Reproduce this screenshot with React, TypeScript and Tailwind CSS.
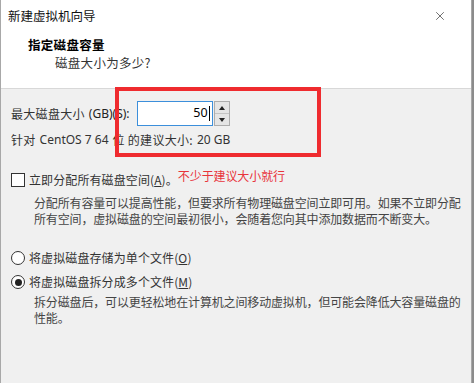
import { X } from 'lucide-react'

const ui = { fontFamily: '"Segoe UI", "Noto Sans", "Noto Sans CJK SC", sans-serif' }
const song = { fontFamily: '"Noto Sans CJK SC", "Noto Sans", sans-serif' }

function Radio({ checked }: { checked?: boolean }) {
  return (
    <span className="flex h-[14px] w-[14px] shrink-0 items-center justify-center rounded-full border border-[#333] bg-white">
      {checked && <span className="h-[7px] w-[7px] rounded-full bg-[#222]" />}
    </span>
  )
}

export default function App() {
  return (
    <div className="flex h-[383px] w-[474px] bg-[#8c8c8c] text-[12px] text-[#1a1a1a]" style={song}>
      <div className="relative flex h-full w-[472px] flex-col border-l border-r border-[#a8a8a8] bg-[#f0f0f0]">
        {/* Header */}
        <div className="h-[89px] shrink-0 border-b border-[#d8d8d8] bg-white">
          <div className="flex items-center justify-between pl-[7px] pr-[24px] pt-[7px]">
            <span className="text-[12.5px] leading-[18px] text-[#111]">新建虚拟机向导</span>
            <X className="h-[14px] w-[14px] text-[#333]" strokeWidth={1.2} />
          </div>
          <div className="ml-[27px] mt-[12px] text-[12.5px] font-bold leading-[16px] tracking-[0.3px] text-black">
            指定磁盘容量
          </div>
          <div className="ml-[54px] mt-[2px] text-[12.5px] leading-[16px] tracking-[0.3px] text-[#333]">
            磁盘大小为多少?
          </div>
        </div>

        {/* Body */}
        <div className="flex flex-col pl-[10px]">
          <div className="mt-[12px] flex h-[25px] items-center">
            <span className="tracking-[0.3px] text-[#333]">最大磁盘大小</span>
            <span className="ml-[4px] text-[#222]" style={ui}>(GB)(S):</span>
            <div className="ml-[7px] flex h-[25px] w-[76px] items-center justify-end border border-[#3c8fdb] bg-white pr-[2px]">
              <span className="text-[12.5px] text-black" style={ui}>50</span>
              <span className="ml-[1px] h-[15px] w-px bg-black" />
            </div>
            <div className="ml-[1px] flex h-[25px] w-[16px] flex-col border border-[#adadad] bg-[#e5e5e5]">
              <div className="flex flex-1 items-center justify-center border-b border-[#c4c4c4]">
                <span className="h-0 w-0 border-x-[3.5px] border-b-[4px] border-x-transparent border-b-[#222]" />
              </div>
              <div className="flex flex-1 items-center justify-center">
                <span className="h-0 w-0 border-x-[3.5px] border-t-[4px] border-x-transparent border-t-[#222]" />
              </div>
            </div>
          </div>

          <div className="mt-[5px] flex items-center leading-[18px] text-[#333]">
            <span className="tracking-[0.3px]">针对</span>
            <span className="ml-[4px]" style={ui}>CentOS 7 64</span>
            <span className="ml-[4px] tracking-[0.3px]">位 的建议大小:</span>
            <span className="ml-[4px]" style={ui}>20 GB</span>
          </div>

          <div className="mt-[22px] flex items-center">
            <span className="h-[14px] w-[14px] shrink-0 border border-[#333] bg-white" />
            <span className="ml-[4px] tracking-[0.1px] text-[#333]">
              立即分配所有磁盘空间(<span className="underline">A</span>)。
            </span>
            <span className="-mt-[8px] tracking-[-0.1px] text-[#e8343b]">不少于建议大小就行</span>
          </div>

          <div className="ml-[23px] mt-[6px] whitespace-nowrap leading-[16px] tracking-[-0.15px] text-[#444]">
            <div>分配所有容量可以提高性能，但要求所有物理磁盘空间立即可用。如果不立即分配</div>
            <div>所有空间，虚拟磁盘的空间最初很小，会随着您向其中添加数据而不断变大。</div>
          </div>

          <div className="mt-[22px] flex items-center">
            <Radio />
            <span className="ml-[4px] tracking-[0.1px] text-[#333]">
              将虚拟磁盘存储为单个文件(<span className="underline">O</span>)
            </span>
          </div>
          <div className="mt-[6px] flex items-center">
            <Radio checked />
            <span className="ml-[4px] tracking-[0.1px] text-[#333]">
              将虚拟磁盘拆分成多个文件(<span className="underline">M</span>)
            </span>
          </div>
          <div className="ml-[23px] mt-[3px] whitespace-nowrap leading-[16px] tracking-[-0.15px] text-[#444]">
            <div>拆分磁盘后，可以更轻松地在计算机之间移动虚拟机，但可能会降低大容量磁盘的</div>
            <div>性能。</div>
          </div>
        </div>

        {/* Red annotation box */}
        <div className="pointer-events-none absolute left-[114px] top-[87px] h-[70px] w-[206px] border-[4px] border-[#ef2b2f]" />
      </div>
    </div>
  )
}
